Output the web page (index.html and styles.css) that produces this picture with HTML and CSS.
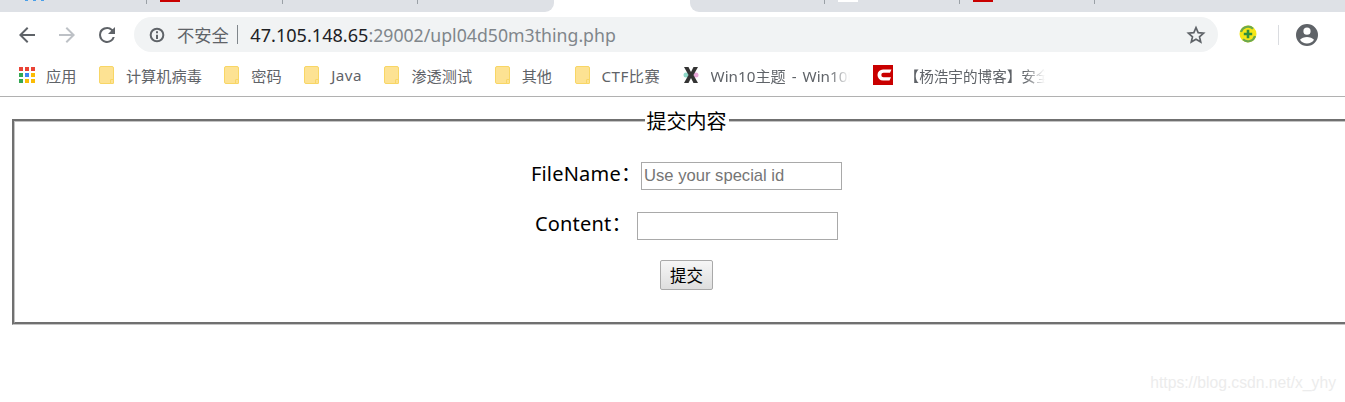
FILE: index.html
```html
<!DOCTYPE html>
<html lang="zh-CN">
<head>
    <meta charset="UTF-8">
    <title>upl04d50m3thing</title>
    <link rel="stylesheet" href="styles.css">
</head>
<body>
    <div class="tabstrip">
        <div class="tabs tabs-left">
            <div class="tab tab-first"><span class="fav fav-blue"></span></div>
            <div class="tab"><span class="fav fav-red"></span></div>
            <div class="tab"></div>
            <div class="tab tab-last"></div>
        </div>
        <div class="tab-active"></div>
        <div class="tabs tabs-right">
            <div class="tab"></div>
            <div class="tab"><span class="fav fav-white"></span></div>
            <div class="tab"><span class="fav fav-red"></span></div>
        </div>
    </div>

    <div class="toolbar">
        <svg class="nav-icon" viewBox="0 0 24 24"><path d="M20 11H7.800l5.600-5.600L12 4l-8 8 8 8 1.400-1.400L7.800 13H20z" fill="#5f6368"/></svg>
        <svg class="nav-icon" viewBox="0 0 24 24"><path d="M4 11h12.200l-5.600-5.600L12 4l8 8-8 8-1.400-1.400 5.600-5.600H4z" fill="#bdc1c6"/></svg>
        <svg class="nav-icon" viewBox="0 0 24 24"><path d="M17.650 6.350A8 8 0 0 0 4 12a8 8 0 0 0 15.740 2h-2.080A6 6 0 1 1 12 6c1.660 0 3.140.690 4.220 1.780L13 11h7V4z" fill="#5f6368"/></svg>
        <div class="omnibox">
            <svg class="info-icon" viewBox="0 0 24 24"><path d="M10.500 6.500h3v3h-3zm0 5h3v6.500h-3zM12 1a11 11 0 1 0 0 22 11 11 0 0 0 0-22zm0 19a8 8 0 1 1 0-16 8 8 0 0 1 0 16z" fill="#5f6368"/></svg>
            <span class="insecure">不安全</span>
            <span class="omni-sep"></span>
            <span class="url"><span class="host">47.105.148.65</span>:29002/upl04d50m3thing.php</span>
            <svg class="star-icon" viewBox="0 0 24 24"><path d="M12 3.200l2.600 6 6.500.6-4.900 4.300 1.500 6.400-5.700-3.400-5.700 3.400 1.500-6.400-4.900-4.300 6.500-.6z" fill="none" stroke="#5f6368" stroke-width="2"/></svg>
        </div>
        <svg class="ext-icon" viewBox="0 0 18 18">
            <circle cx="9" cy="9" r="8.500" fill="#f5e616"/>
            <path d="M2 7A7.200 7.200 0 0 1 14 3.800M16 11A7.200 7.200 0 0 1 4 14.200" fill="none" stroke="#6aa84f" stroke-width="2.200"/>
            <path d="M7.700 4.800h2.600v2.900h2.900v2.600h-2.900v2.900H7.700v-2.900H4.800V7.700h2.900z" fill="#2f8f3e"/>
        </svg>
        <span class="tool-sep"></span>
        <svg class="avatar-icon" viewBox="0 0 24 24"><path d="M12 1a11 11 0 1 0 0 22 11 11 0 0 0 0-22zm0 3.600a3.600 3.600 0 1 1 0 7.200 3.600 3.600 0 0 1 0-7.200zm0 16a8.400 8.400 0 0 1-7-3.800c1-1.900 4.600-2.900 7-2.900s6 1 7 2.900a8.400 8.400 0 0 1-7 3.800z" fill="#5f6368"/></svg>
    </div>

    <div class="bookmarks">
        <div class="bookmark">
            <svg class="apps-icon" viewBox="0 0 16 16">
                <g fill="#ea4335"><rect x="0" y="0" width="4" height="4"/><rect x="6" y="0" width="4" height="4"/><rect x="12" y="0" width="4" height="4"/></g>
                <rect x="0" y="6" width="4" height="4" fill="#34a853"/>
                <rect x="6" y="6" width="4" height="4" fill="#4285f4"/>
                <rect x="12" y="6" width="4" height="4" fill="#fbbc05"/>
                <rect x="0" y="12" width="4" height="4" fill="#34a853"/>
                <g fill="#fbbc05"><rect x="6" y="12" width="4" height="4"/><rect x="12" y="12" width="4" height="4"/></g>
            </svg>
            <span>应用</span>
        </div>
        <div class="bookmark"><span class="folder"></span><span>计算机病毒</span></div>
        <div class="bookmark"><span class="folder"></span><span>密码</span></div>
        <div class="bookmark"><span class="folder"></span><span class="wide">Java</span></div>
        <div class="bookmark"><span class="folder"></span><span>渗透测试</span></div>
        <div class="bookmark"><span class="folder"></span><span>其他</span></div>
        <div class="bookmark"><span class="folder"></span><span class="wide">CTF比赛</span></div>
        <div class="bookmark">
            <svg class="x-icon" viewBox="0 0 16 18" preserveAspectRatio="none">
                <circle cx="3" cy="9" r="2.500" fill="#8fd8c8"/>
                <circle cx="13" cy="9" r="2.500" fill="#e8a8d8"/>
                <path d="M1 1h4.500L8 6l2.500-5H15l-4.500 8 4.500 8h-4.500L8 12l-2.500 5H1l4.500-8z" fill="#333"/>
            </svg>
            <span class="fade fade-win">Win10主题 - Win10F</span>
        </div>
        <div class="bookmark">
            <svg class="csdn-icon" viewBox="0 0 20 20">
                <rect width="20" height="20" fill="#c90000"/>
                <path d="M18.500 4.500H10a5.500 5.500 0 0 0 0 11h6.500l1.500-3.300h-7.500a2.200 2.200 0 0 1 0-4.400H17z" fill="#fff"/>
            </svg>
            <span class="fade fade-blog">【杨浩宇的博客】安全</span>
        </div>
    </div>

    <form class="page">
        <fieldset class="panel">
            <legend>提交内容</legend>
            <div class="row">FileName：<input type="text" placeholder="Use your special id"></div>
            <div class="row">Content：&nbsp;<input type="text"></div>
            <div class="row row-submit"><button type="button">提交</button></div>
        </fieldset>
    </form>

    <div class="watermark">https://blog.csdn.net/x_yhy</div>
</body>
</html>
```

FILE: styles.css
```css
html, body {
    margin: 0;
    height: 100%;
    overflow: hidden;
}
body {
    position: relative;
    background-color: #fff;
    font-family: "Noto Sans", "Noto Sans CJK SC", sans-serif;
}

/* tab strip, only the bottom of it is in the shot */
.tabstrip {
    display: flex;
    height: 12px;
}
.tabs {
    display: flex;
    background-color: #dee1e6;
}
.tabs-left {
    width: 554px;
    border-bottom-right-radius: 9px;
}
.tabs-right {
    flex: 1;
    border-bottom-left-radius: 9px;
}
.tab-active {
    width: 136px;
}
.tab {
    width: 135px;
    height: 4px;
    border-right: 1px solid #9aa0a6;
    padding-left: 13px;
    box-sizing: border-box;
}
.tabs-left .tab {
    width: 136px;
}
.tabs-left .tab-first {
    width: 147px;
    padding-left: 20px;
}
.tab-last {
    border-right: none;
}
.fav {
    display: block;
    width: 20px;
    height: 2px;
}
.fav-blue {
    width: 24px;
    height: 1px;
    background: repeating-linear-gradient(90deg, #dee1e6 0 5px, #4a9fe8 5px 8px);
}
.fav-red {
    background-color: #c90000;
}
.fav-white {
    background-color: #fff;
}

/* toolbar */
.toolbar {
    display: flex;
    align-items: center;
    height: 46px;
    padding-left: 15px;
    box-sizing: border-box;
}
.nav-icon {
    width: 24px;
    height: 24px;
    margin-right: 16px;
}
.nav-icon:nth-child(3) {
    margin-right: 15px;
}
.omnibox {
    display: flex;
    align-items: center;
    width: 1084px;
    height: 35px;
    margin-top: -1px;
    padding: 0 12px 0 15px;
    box-sizing: border-box;
    border-radius: 18px;
    background-color: #f1f3f4;
    color: #80868b;
    font-size: 17.700px;
    white-space: nowrap;
}
.info-icon {
    width: 16px;
    height: 16px;
    margin-right: 12px;
}
.insecure {
    font-size: 17.300px;
    color: #5f6368;
}
.omni-sep {
    width: 1.500px;
    height: 19px;
    margin: 0 12px 0 8px;
    background-color: #80868b;
}
.url {
    flex: 1;
}
.host {
    color: #202124;
    font-size: 18.100px;
}
.star-icon {
    width: 20px;
    height: 20px;
}
.ext-icon {
    width: 18px;
    height: 18px;
    margin: -2px 0 0 21px;
}
.tool-sep {
    width: 1px;
    height: 20px;
    margin: 0 16px 0 21px;
    background-color: #dadce0;
}
.avatar-icon {
    width: 24px;
    height: 24px;
}

/* bookmarks */
.bookmarks {
    display: flex;
    align-items: center;
    gap: 22.500px;
    height: 39px;
    padding: 0 0 4px 19px;
    box-sizing: border-box;
    border-bottom: 1px solid #b1b1b1;
    color: #5f6368;
    font-size: 15.200px;
    white-space: nowrap;
}
.bookmark {
    display: flex;
    align-items: center;
    gap: 11px;
}
.wide {
    letter-spacing: .45px;
}
.apps-icon {
    width: 16px;
    height: 16px;
}
.folder {
    position: relative;
    width: 15px;
    height: 18px;
    border: 1px solid #f8d665;
    border-radius: 2px;
    box-sizing: border-box;
    background-color: #fde293;
    margin-right: 1px;
}
.folder::after {
    content: "";
    position: absolute;
    right: -1px;
    bottom: -1px;
    width: 4px;
    height: 5px;
    border: 1px solid #f8d665;
    border-radius: 1px;
    background-color: #fde293;
    box-sizing: border-box;
}
.x-icon {
    width: 16px;
    height: 18px;
    margin-right: 1px;
}
.csdn-icon {
    width: 20px;
    height: 20px;
    margin: -1px 1px 0 0;
}
.fade {
    display: block;
    overflow: hidden;
    -webkit-mask-image: linear-gradient(90deg, #000 85%, transparent);
    mask-image: linear-gradient(90deg, #000 85%, transparent);
}
.fade-win {
    width: 139.500px;
    word-spacing: 2px;
}
.fade-blog {
    width: 140px;
    font-size: 14.600px;
}

/* the form */
.page {
    padding: 12px 0 0 12px;
}
.panel {
    width: 1349px;
    height: 216px;
    margin: 0;
    padding: 0;
    box-sizing: border-box;
    border: 3px groove #c4c4c4;
    color: #000;
    font-size: 20px;
    text-align: center;
}
.panel legend {
    padding: 3px 2px 0;
    text-align: center;
    font-size: 20px;
    line-height: 20px;
}
.row {
    height: 28px;
    line-height: 24px;
    margin-top: 22px;
    letter-spacing: .2px;
}
.row:first-of-type {
    margin-top: 30px;
}
.row input {
    width: 201px;
    height: 28px;
    padding: 1px 2px;
    box-sizing: border-box;
    border: 1px solid #a9a9a9;
    font-family: "Liberation Sans", Arial, sans-serif;
    font-size: 16.600px;
    vertical-align: top;
}
.row-submit {
    height: 30px;
    margin-top: 20px;
}
.row-submit button {
    width: 53px;
    height: 30px;
    padding: 0;
    border: 1px solid #a9a9a9;
    border-radius: 2px;
    background: linear-gradient(#f6f6f6, #dedede);
    font-family: "Noto Sans CJK SC", sans-serif;
    font-size: 16.500px;
    vertical-align: top;
}

.watermark {
    position: absolute;
    right: 9px;
    bottom: 10px;
    color: #ececec;
    font-family: "Liberation Sans", Arial, sans-serif;
    font-size: 15.700px;
}
```
